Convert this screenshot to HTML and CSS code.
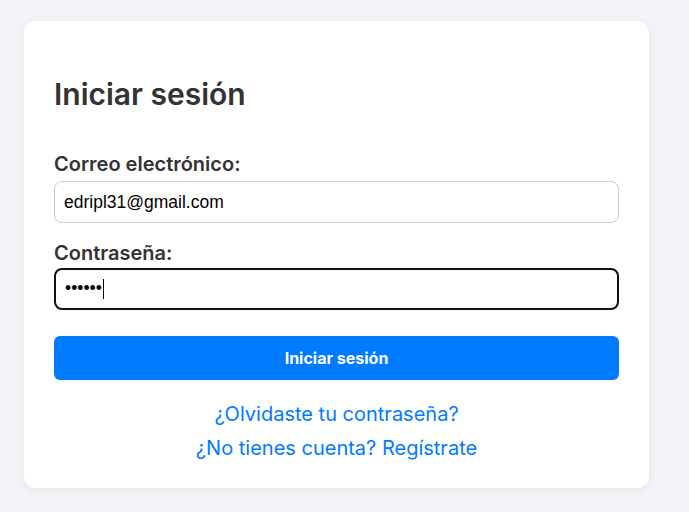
FILE: index.html
```html
<!DOCTYPE html>
<html lang="es">
<head>
<meta charset="utf-8">
<title>Iniciar sesión</title>
<link rel="stylesheet" href="styles.css">
</head>
<body>
<main class="card">
  <h1 class="title">Iniciar sesión</h1>
  <form class="form">
    <label class="label" for="email">Correo electrónico:</label>
    <input class="input" id="email" type="email" value="edripl31@gmail.com">
    <label class="label" for="pass">Contraseña:</label>
    <div class="input input-focus" id="pass"><span class="dots">••••••</span><span class="caret"></span></div>
    <button class="btn" type="button">Iniciar sesión</button>
  </form>
  <div class="links">
    <a class="link" href="#">¿Olvidaste tu contraseña?</a>
    <a class="link" href="#">¿No tienes cuenta? Regístrate</a>
  </div>
</main>
</body>
</html>
```

FILE: styles.css
```css
* { box-sizing: border-box; }
html, body { margin: 0; padding: 0; }
body {
  background: #f4f5f9;
  font-family: Inter, "Noto Sans", sans-serif;
  color: #333;
  padding: 21px 0 0 24px;
  height: 512px;
  overflow: hidden;
}
.card {
  width: 625px;
  background: #fff;
  border-radius: 12px;
  box-shadow: 0 2px 12px rgba(0,0,0,0.07);
  padding: 55px 30px 28px;
}
.title {
  margin: 0 0 40px;
  font-size: 30px;
  font-weight: 600;
  line-height: 36px;
  color: #333;
}
.form { display: flex; flex-direction: column; }
.label {
  font-size: 20px;
  font-weight: 600;
  line-height: 24px;
  margin-bottom: 5px;
  color: #333;
}
.input {
  height: 42px;
  width: 100%;
  border: 1px solid #ccc;
  border-radius: 8px;
  padding: 0 9px;
  font-family: "Liberation Sans", Arial, sans-serif;
  font-size: 17.5px;
  color: #000;
  margin-bottom: 18px;
  outline: none;
  background: #fff;
}
.input-focus {
  border: 2px solid #111;
  display: flex;
  align-items: center;
  padding: 0 9px;
  margin-top: -2px;
  margin-bottom: 26px;
}
.dots { line-height: 1; }
.caret { width: 1px; height: 20px; background: #000; margin-left: 1px; }
.btn {
  height: 44px;
  width: 100%;
  border: none;
  border-radius: 6px;
  background: #007bff;
  color: #fff;
  font-family: Inter, sans-serif;
  font-weight: 700;
  font-size: 16px;
}
.links {
  display: flex;
  flex-direction: column;
  align-items: center;
  gap: 10px;
  margin-top: 22px;
}
.link {
  color: #007bff;
  text-decoration: none;
  font-size: 20px;
  line-height: 24px;
}
```
